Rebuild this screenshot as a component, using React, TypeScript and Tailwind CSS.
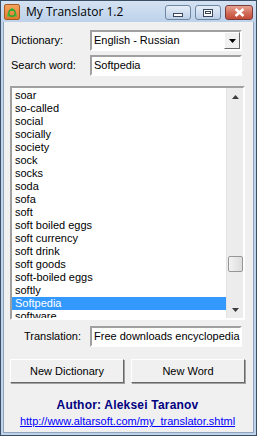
import * as React from 'react';

const words = [
  'soar', 'so-called', 'social', 'socially', 'society', 'sock', 'socks', 'soda', 'sofa', 'soft',
  'soft boiled eggs', 'soft currency', 'soft drink', 'soft goods', 'soft-boiled eggs', 'softly',
  'Softpedia', 'software',
];

const sunken = 'border-t-[#a0a0a0] border-l-[#a0a0a0] border-b-white border-r-white';

const TitleButton: React.FC<{kind: 'min' | 'max' | 'close'}> = ({kind}) => {
  if (kind === 'close') {
    return (
      <div className="w-[28px] h-[15px] rounded-[3px] border border-[#7a3b3b] bg-gradient-to-b from-[#e8a493] via-[#d2705c] to-[#c24a37] flex items-center justify-center">
        <svg width="11" height="9" viewBox="0 0 11 9">
          <path d="M1.5 1 L9.5 8 M9.5 1 L1.5 8" stroke="#fff" strokeWidth="2.4" />
        </svg>
      </div>
    );
  }
  return (
    <div className="w-[26px] h-[15px] rounded-[3px] border border-[#6f87a3] bg-gradient-to-b from-[#e6eef8] via-[#d2dff0] to-[#bccfe7] flex items-center justify-center">
      {kind === 'min' ? (
        <div className="w-[10px] h-[4px] border border-[#39485a] bg-white mt-[4px]" />
      ) : (
        <div className="w-[10px] h-[8px] border border-[#39485a] bg-white flex items-center justify-center">
          <div className="w-[6px] h-[3px] border border-[#39485a]" />
        </div>
      )}
    </div>
  );
};

const Field: React.FC<{children: React.ReactNode; className?: string}> = ({children, className}) => (
  <div className={`w-[152px] h-[21px] border-2 ${sunken} bg-white flex items-center ${className ?? ''}`}>
    {children}
  </div>
);

const App: React.FC = () => {
  return (
    <div className="w-[257px] h-[436px] bg-[#3a4f66] p-px flex flex-col font-['Liberation_Sans',sans-serif] text-[11px] text-black leading-none select-none">
      {/* title bar */}
      <div className="h-[21px] bg-gradient-to-b from-[#d4e2f2] to-[#bdd2ea] flex items-center pl-[3px] pr-[3px]">
        <div className="w-[16px] h-[16px] rounded-[2px] bg-gradient-to-b from-[#f5a25e] to-[#e07a2c] border border-[#a85a20] flex items-center justify-center">
          <svg width="12" height="12" viewBox="0 0 12 12">
            <path d="M6 1.5 L9 5 L3 5 Z" fill="#3fbf3f" />
            <path d="M2 7 L5 10.5 L1 10.5 Z" fill="#3fbf3f" />
            <path d="M10 7 L11 10.5 L7 10.5 Z" fill="#3fbf3f" />
            <circle cx="6" cy="7" r="3.2" fill="none" stroke="#2ea82e" strokeWidth="1.4" />
          </svg>
        </div>
        <span className="ml-[6px] text-[12px] font-['Open_Sans',sans-serif] text-black">My Translator 1.2</span>
        <div className="ml-auto flex gap-[4px] mt-[2px]">
          <TitleButton kind="min" />
          <TitleButton kind="max" />
          <TitleButton kind="close" />
        </div>
      </div>

      {/* frame */}
      <div className="flex-1 bg-[#bfd4eb] px-[2px] pb-[2px] flex">
        <div className="flex-1 bg-[#f0f0f0] border border-[#8ea4bc] border-t-0 pl-[6px] pr-[8px] pt-[8px] flex flex-col">
          <div className="flex items-center">
            <span className="w-[80px] pl-[1px]">Dictionary:</span>
            <Field>
              <span className="pl-[2px] flex-1">English - Russian</span>
              <div className="w-[16px] h-[17px] bg-[#f0f0f0] border border-t-white border-l-white border-b-[#696969] border-r-[#696969] flex items-center justify-center">
                <svg width="7" height="4" viewBox="0 0 7 4"><path d="M0 0 H7 L3.5 4 Z" fill="#000" /></svg>
              </div>
            </Field>
          </div>

          <div className="flex items-center mt-[4px]">
            <span className="w-[80px] pl-[1px]">Search word:</span>
            <Field>
              <span className="pl-[2px]">Softpedia</span>
            </Field>
          </div>

          {/* list */}
          <div className={`mt-[10px] h-[234px] border-2 ${sunken} bg-white flex overflow-hidden`}>
            <div className="flex-1 flex flex-col pt-[1px]">
              {words.map(w => (
                <div
                  key={w}
                  className={`h-[13px] shrink-0 pl-[3px] flex items-center ${w === 'Softpedia' ? 'bg-[#3399ff] text-white' : ''}`}
                >
                  {w}
                </div>
              ))}
            </div>
            <div className="w-[17px] bg-[#ececec] border-l border-[#e3e3e3] flex flex-col items-center">
              <div className="h-[17px] flex items-center justify-center">
                <svg width="7" height="4" viewBox="0 0 7 4"><path d="M3.5 0 L7 4 H0 Z" fill="#3c3c3c" /></svg>
              </div>
              <div className="flex-1 w-full flex flex-col items-center pt-[151px]">
                <div className="w-[15px] h-[16px] rounded-[2px] border border-[#979797] bg-gradient-to-r from-[#f3f3f3] to-[#dcdcdc]" />
              </div>
              <div className="h-[17px] flex items-center justify-center">
                <svg width="7" height="4" viewBox="0 0 7 4"><path d="M0 0 H7 L3.5 4 Z" fill="#3c3c3c" /></svg>
              </div>
            </div>
          </div>

          <div className="flex items-center mt-[6px]">
            <span className="w-[80px] text-right pr-[9px]">Translation:</span>
            <Field>
              <span className="pl-[2px] whitespace-nowrap">Free downloads encyclopedia</span>
            </Field>
          </div>

          <div className="flex mt-[12px] gap-[7px]">
            <div className="w-[114px] h-[24px] border border-t-white border-l-white border-b-[#696969] border-r-[#696969] bg-[#f0f0f0] flex items-center justify-center shadow-[1px_1px_0_#a0a0a0]">
              New Dictionary
            </div>
            <div className="w-[114px] h-[24px] border border-t-white border-l-white border-b-[#696969] border-r-[#696969] bg-[#f0f0f0] flex items-center justify-center shadow-[1px_1px_0_#a0a0a0]">
              New Word
            </div>
          </div>

          <div className="mt-[16px] flex flex-col items-center">
            <span className="font-bold text-[12px] text-[#000080] tracking-[0.2px]">Author: Aleksei Taranov</span>
            <span className="mt-[5px] text-[#0000ff] underline whitespace-nowrap">http://www.altarsoft.com/my_translator.shtml</span>
          </div>
        </div>
      </div>
    </div>
  );
};

export default App;
